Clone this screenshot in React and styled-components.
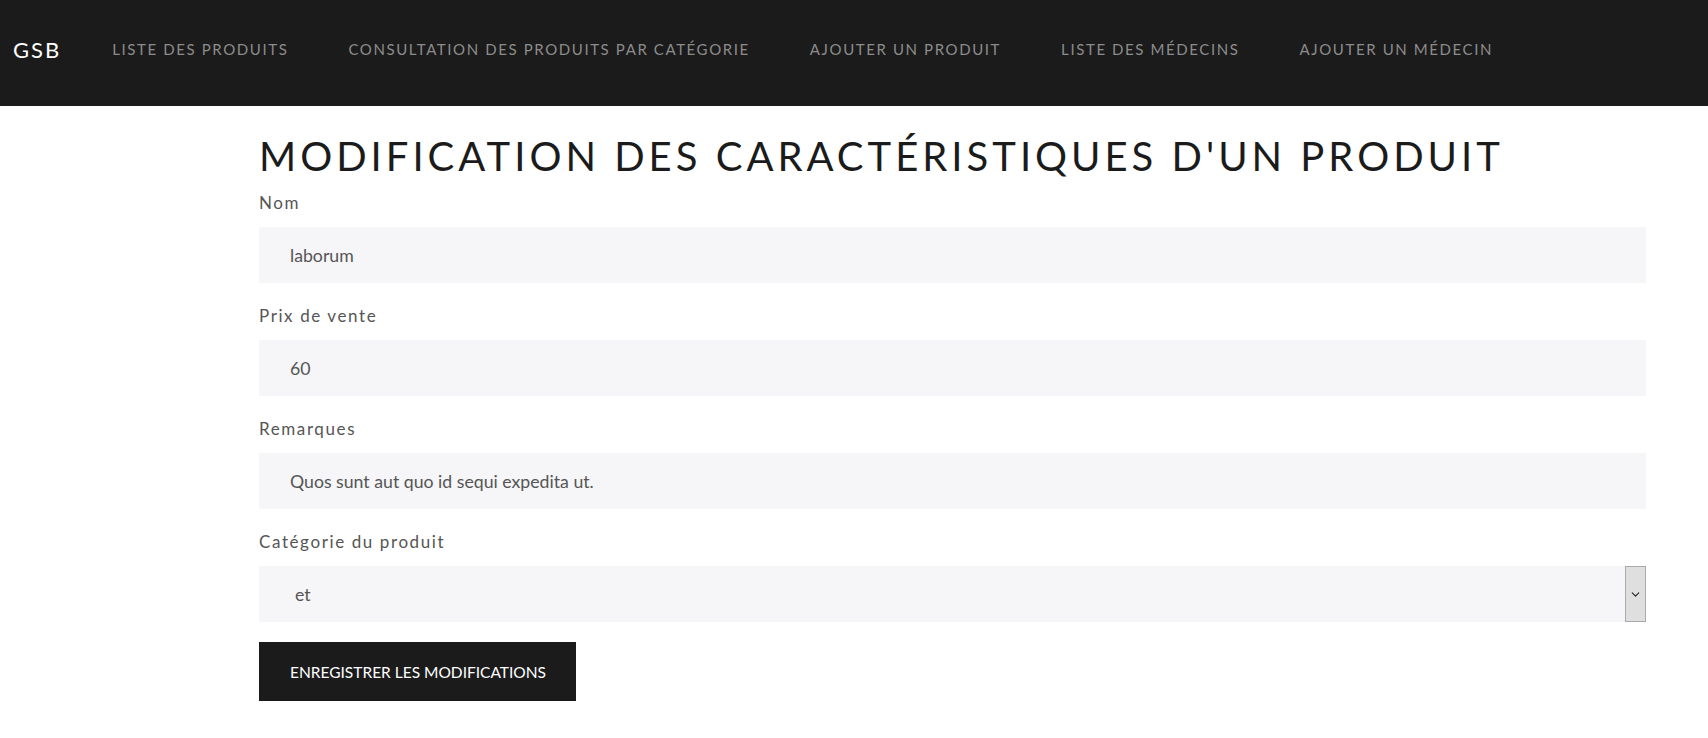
import React from "react";
import styled, { createGlobalStyle } from "styled-components";
import { ChevronDown } from "lucide-react";

const GlobalStyle = createGlobalStyle`
body {
    margin: 0;
    background: #fff;
    font-family: "Lato", "Open Sans", sans-serif;
}
* { box-sizing: border-box; }
`;

const Navbar = styled.nav`
display: flex;
align-items: center;
height: 106px;
background: #1b1b1b;
padding: 0 14px 8px 13px;
`;
const Brand = styled.a`
color: #fff;
font-size: 22px;
letter-spacing: 2px;
text-decoration: none;
margin-right: 21px;
`;
const NavLinks = styled.ul`
display: flex;
list-style: none;
margin: 0;
padding: 0;
`;
const NavLink = styled.li`
padding: 0 30px;
color: #8c8c8c;
font-size: 15px;
letter-spacing: 1.6px;
text-transform: uppercase;
white-space: nowrap;
`;

const Main = styled.main`
padding: 25px 62px 40px 259px;
`;
const Title = styled.h1`
margin: 0 0 10px;
font-size: 40px;
font-weight: 400;
line-height: 50px;
letter-spacing: 4px;
color: #1b1b1b;
text-transform: uppercase;
white-space: nowrap;
`;
const Group = styled.div`
margin-bottom: 21px;
`;
const Label = styled.label`
display: block;
font-size: 17px;
line-height: 24px;
letter-spacing: 1.6px;
color: #555;
margin-bottom: 12px;
`;
const Input = styled.div`
height: 56px;
display: flex;
align-items: center;
padding: 0 31px;
background: #f6f6f8;
color: #555;
font-size: 17.7px;
`;
const Select = styled(Input)`
padding: 0 0 0 36px;
justify-content: space-between;
`;
const Arrow = styled.span`
display: flex;
align-items: center;
justify-content: center;
width: 21px;
height: 100%;
background: #dfdfdf;
border: 1px solid #a9a9a9;
color: #222;
`;
const Button = styled.button`
margin-top: -1px;
height: 59px;
padding: 0 30px 0 31px;
background: #1b1b1b;
color: #fff;
border: none;
font-family: inherit;
font-size: 15.5px;
text-transform: uppercase;
`;

const links = [
    "Liste des produits",
    "Consultation des produits par catégorie",
    "Ajouter un produit",
    "Liste des médecins",
    "Ajouter un médecin",
];

const fields = [
    { label: "Nom", value: "laborum" },
    { label: "Prix de vente", value: "60" },
    { label: "Remarques", value: "Quos sunt aut quo id sequi expedita ut." },
];

function App() {
    return (
        <>
            <GlobalStyle />
            <Navbar>
                <Brand href="#">GSB</Brand>
                <NavLinks>
                    {links.map((l) => <NavLink key={l}>{l}</NavLink>)}
                </NavLinks>
            </Navbar>
            <Main>
                <Title>Modification des caractéristiques d'un produit</Title>
                {fields.map((f) => (
                    <Group key={f.label}>
                        <Label>{f.label}</Label>
                        <Input>{f.value}</Input>
                    </Group>
                ))}
                <Group>
                    <Label>Catégorie du produit</Label>
                    <Select>
                        et
                        <Arrow><ChevronDown size={13} strokeWidth={2} /></Arrow>
                    </Select>
                </Group>
                <Button>Enregistrer les modifications</Button>
            </Main>
        </>
    );
}

export default App;
